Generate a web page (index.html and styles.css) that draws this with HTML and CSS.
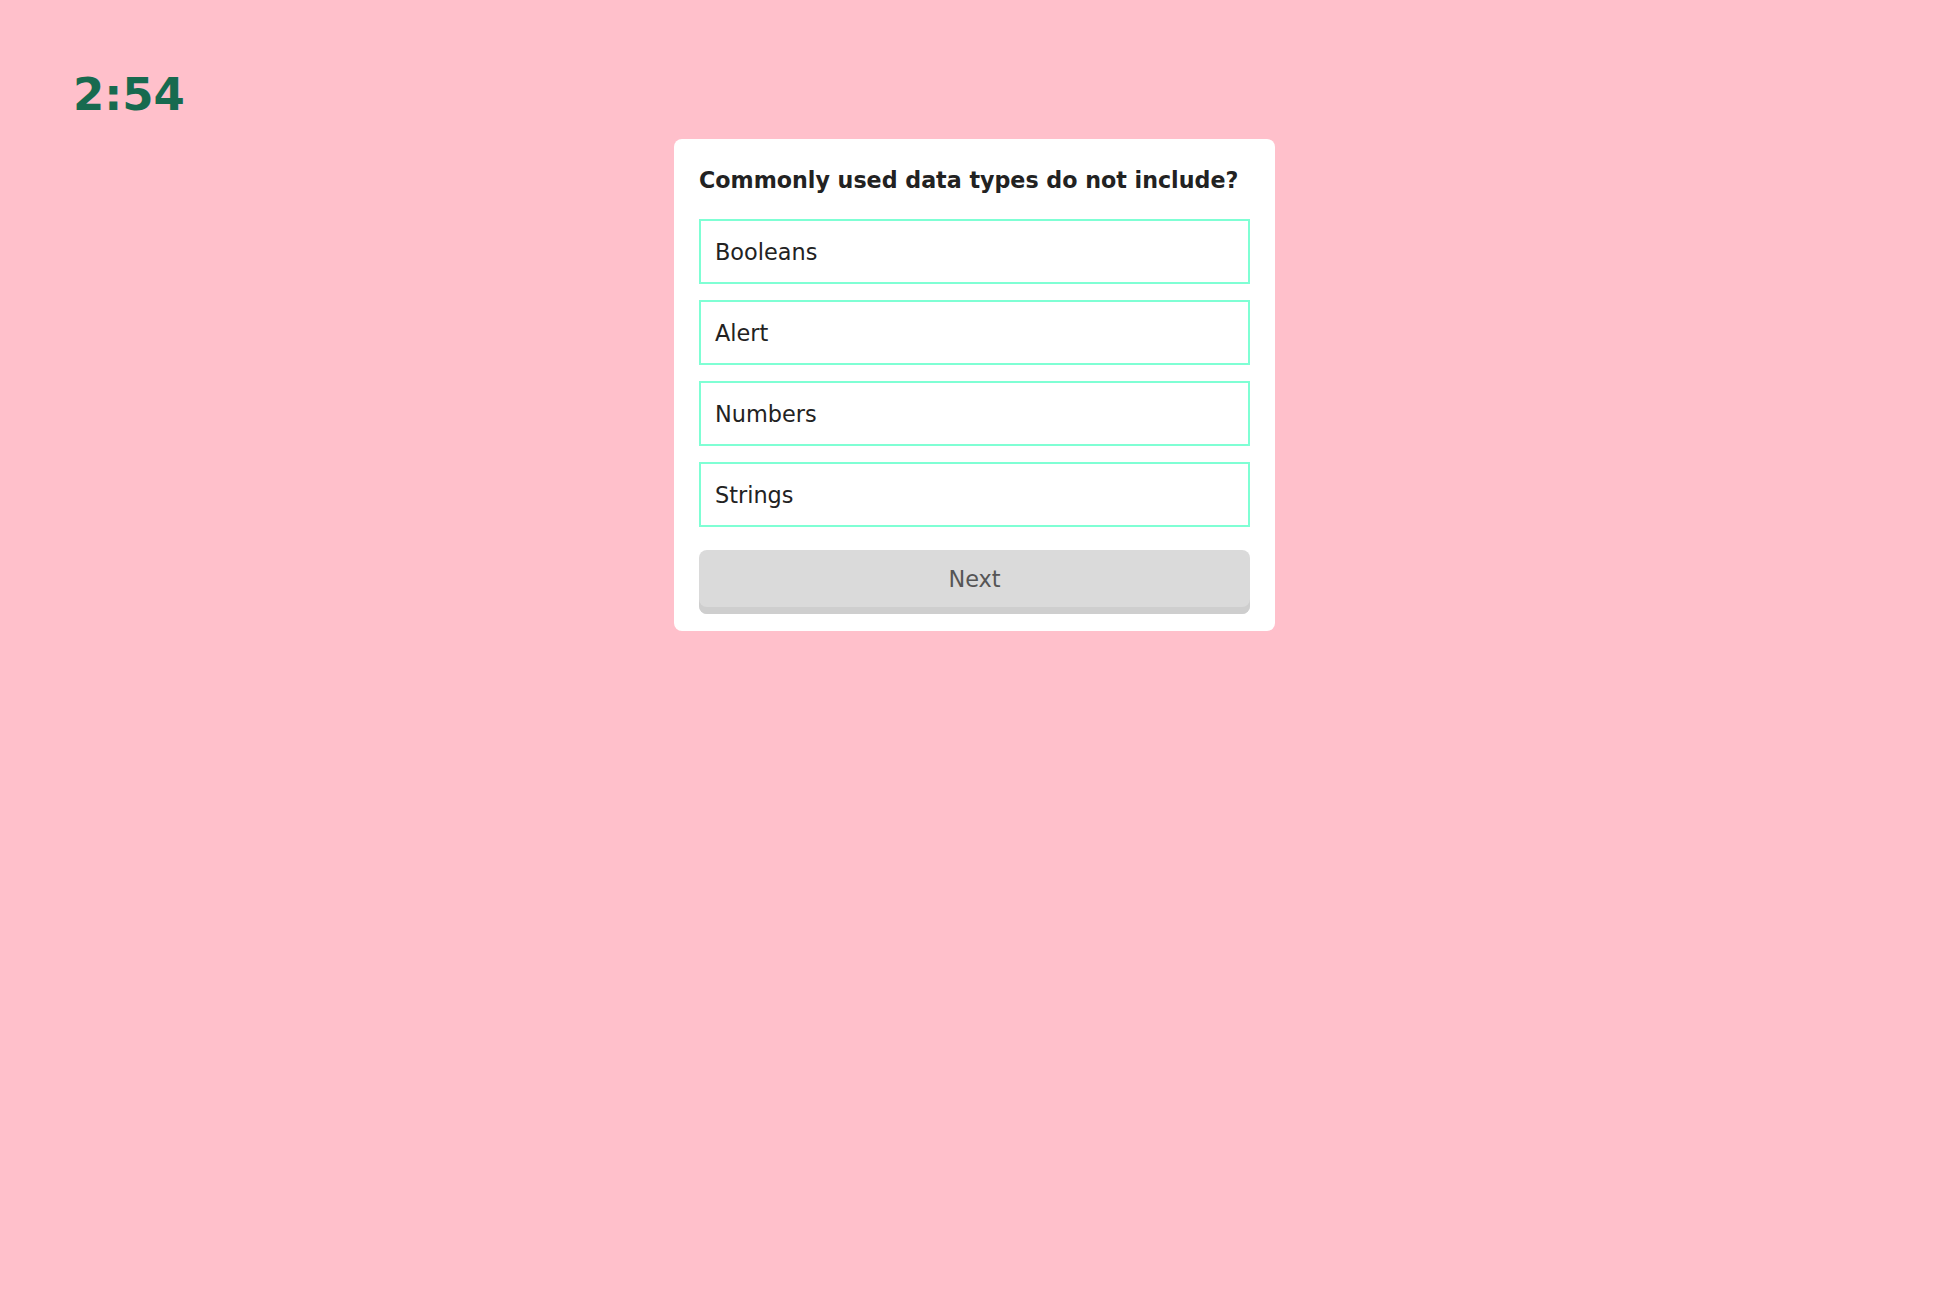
FILE: index.html
```html
<!DOCTYPE html>
<html lang="en">
<head>
<meta charset="utf-8">
<title>Quiz</title>
<link rel="stylesheet" href="styles.css">
</head>
<body>
<div class="timer">2:54</div>
<main class="card">
  <h2 class="question">Commonly used data types do not include?</h2>
  <ul class="options">
    <li class="option">Booleans</li>
    <li class="option">Alert</li>
    <li class="option">Numbers</li>
    <li class="option">Strings</li>
  </ul>
  <button class="next">Next</button>
</main>
</body>
</html>
```

FILE: styles.css
```css
html, body {
  margin: 0;
  padding: 0;
}
body {
  background: #ffc0cb;
  font-family: "DejaVu Sans", Verdana, sans-serif;
  color: #222;
  min-height: 1299px;
  padding-left: 1px;
  box-sizing: border-box;
}
.timer {
  padding: 69px 0 0 72px;
  font-size: 45px;
  font-weight: bold;
  color: #176a4f;
  line-height: 52px;
  height: 52px;
}
.card {
  width: 601px;
  box-sizing: border-box;
  margin: 18px auto 0;
  background: #fff;
  border-radius: 8px;
  padding: 28px 25px 17px;
}
.question {
  margin: 0 0 26px;
  font-size: 22.2px;
  font-weight: bold;
  line-height: 26px;
}
.options {
  list-style: none;
  margin: 0;
  padding: 0;
  display: flex;
  flex-direction: column;
  gap: 16px;
}
.option {
  height: 65px;
  box-sizing: border-box;
  border: 2px solid #7fffd4;
  display: flex;
  align-items: center;
  padding: 0 14px;
  font-size: 22.4px;
}
.next {
  display: block;
  width: 100%;
  margin-top: 23px;
  height: 64px;
  box-sizing: border-box;
  border: none;
  border-radius: 8px;
  background: #dadada;
  box-shadow: inset 0 -7px 0 #cecece;
  padding: 0 0 7px;
  font-family: "DejaVu Sans", Verdana, sans-serif;
  font-size: 22.4px;
  color: #555;
}
```
